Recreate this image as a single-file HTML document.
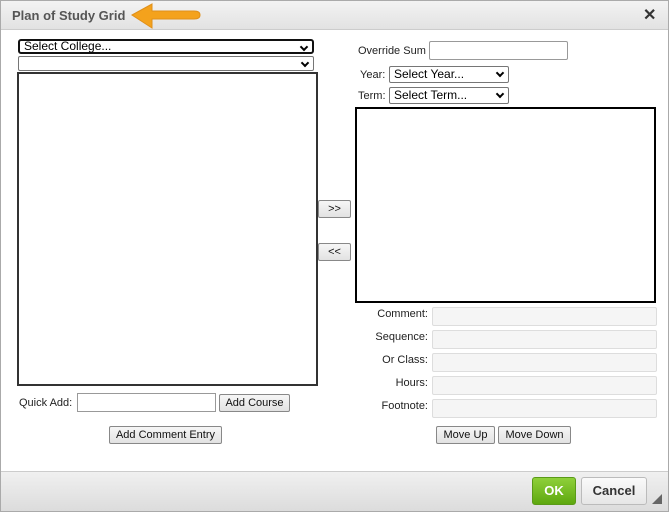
<!DOCTYPE html><html><head><style>
*{box-sizing:border-box}
body{margin:0;width:669px;height:512px;font-family:"Liberation Sans",sans-serif;font-size:11px;background:#fff;position:relative;overflow:hidden}
.a{position:absolute}
.sel{position:absolute;border:1px solid #767676;border-radius:2px;background:#fff;font-size:12px;padding-left:4px;line-height:14px;color:#000}
.sel:after{content:"";position:absolute;right:5px;top:3px;width:4px;height:4px;border-right:2px solid #000;border-bottom:2px solid #000;transform:rotate(45deg)}
.btn{position:absolute;border:1px solid #888;border-radius:2px;background:linear-gradient(#f6f6f6,#e2e2e2);font-size:11px;text-align:center;color:#111}
.inp{position:absolute;border:1px solid #999;background:#fff}
.ro{position:absolute;border:1px solid #ddd;background:#f5f5f5;border-radius:2px}
.lbl{position:absolute;font-size:11px;color:#222;text-align:right}
</style></head><body>
<div class="a" style="left:0;top:0;width:669px;height:512px;border:1px solid #aaa"></div>
<div class="a" style="left:1px;top:1px;width:667px;height:29px;background:linear-gradient(#f3f3f3,#e2e2e2);border-bottom:1px solid #ccc"></div>
<div class="a" style="left:12px;top:8px;font-size:13px;font-weight:bold;color:#555">Plan of Study Grid</div>
<svg class="a" style="left:130px;top:2px" width="74" height="28"><path d="M2 13 L22 2 L22 9 L64 9 Q70 9 70 13 Q70 17 64 17 L22 17 L22 26 Z" fill="#f4a21c" stroke="#e0901a" stroke-width="1"/></svg>
<div class="a" style="left:643px;top:5px;font-size:16px;font-weight:bold;color:#333">✕</div>
<div class="sel" style="left:18px;top:39px;width:296px;height:15px;border:2px solid #111;border-radius:3px;line-height:11px">Select College...</div>
<div class="sel" style="left:18px;top:56px;width:296px;height:15px"></div>
<div class="a" style="left:17px;top:72px;width:301px;height:314px;border:2px solid #333"></div>
<div class="lbl" style="left:19px;top:397px">Quick Add:</div>
<div class="inp" style="left:77px;top:393px;width:139px;height:19px"></div>
<div class="btn" style="left:219px;top:394px;width:71px;height:18px;line-height:16px">Add Course</div>
<div class="btn" style="left:109px;top:426px;width:113px;height:18px;line-height:16px">Add Comment Entry</div>
<div class="btn" style="left:318px;top:200px;width:33px;height:18px;line-height:16px">&gt;&gt;</div>
<div class="btn" style="left:318px;top:243px;width:33px;height:18px;line-height:16px">&lt;&lt;</div>
<div class="lbl" style="left:358px;top:45px">Override Sum</div>
<div class="inp" style="left:429px;top:41px;width:139px;height:19px;border-radius:2px"></div>
<div class="lbl" style="left:360px;top:69px">Year:</div>
<div class="sel" style="left:389px;top:66px;width:120px;height:17px;line-height:15px">Select Year...</div>
<div class="lbl" style="left:358px;top:90px">Term:</div>
<div class="sel" style="left:389px;top:87px;width:120px;height:17px;line-height:15px">Select Term...</div>
<div class="a" style="left:355px;top:107px;width:301px;height:196px;border:2px solid #000"></div>
<div class="lbl" style="left:360px;top:308px;width:68px">Comment:</div>
<div class="ro" style="left:432px;top:307px;width:225px;height:19px"></div>
<div class="lbl" style="left:360px;top:331px;width:68px">Sequence:</div>
<div class="ro" style="left:432px;top:330px;width:225px;height:19px"></div>
<div class="lbl" style="left:360px;top:354px;width:68px">Or Class:</div>
<div class="ro" style="left:432px;top:353px;width:225px;height:19px"></div>
<div class="lbl" style="left:360px;top:377px;width:68px">Hours:</div>
<div class="ro" style="left:432px;top:376px;width:225px;height:19px"></div>
<div class="lbl" style="left:360px;top:400px;width:68px">Footnote:</div>
<div class="ro" style="left:432px;top:399px;width:225px;height:19px"></div>
<div class="btn" style="left:436px;top:426px;width:59px;height:18px;line-height:16px">Move Up</div>
<div class="btn" style="left:498px;top:426px;width:73px;height:18px;line-height:16px">Move Down</div>
<div class="a" style="left:1px;top:471px;width:667px;height:40px;background:linear-gradient(#f0f0f0,#dcdcdc);border-top:1px solid #ccc"></div>
<div class="a" style="left:532px;top:477px;width:44px;height:28px;background:linear-gradient(#8fd03a,#5ea80f);border:1px solid #5a9a18;border-radius:3px;color:#fff;font-weight:bold;font-size:13px;text-align:center;line-height:26px">OK</div>
<div class="a" style="left:581px;top:477px;width:66px;height:28px;background:linear-gradient(#fafafa,#e6e6e6);border:1px solid #bbb;border-radius:3px;color:#333;font-weight:bold;font-size:13px;text-align:center;line-height:26px">Cancel</div>
<svg class="a" style="left:652px;top:494px" width="11" height="11"><path d="M10 0 L10 10 L0 10 Z" fill="#666"/></svg>
</body></html>
